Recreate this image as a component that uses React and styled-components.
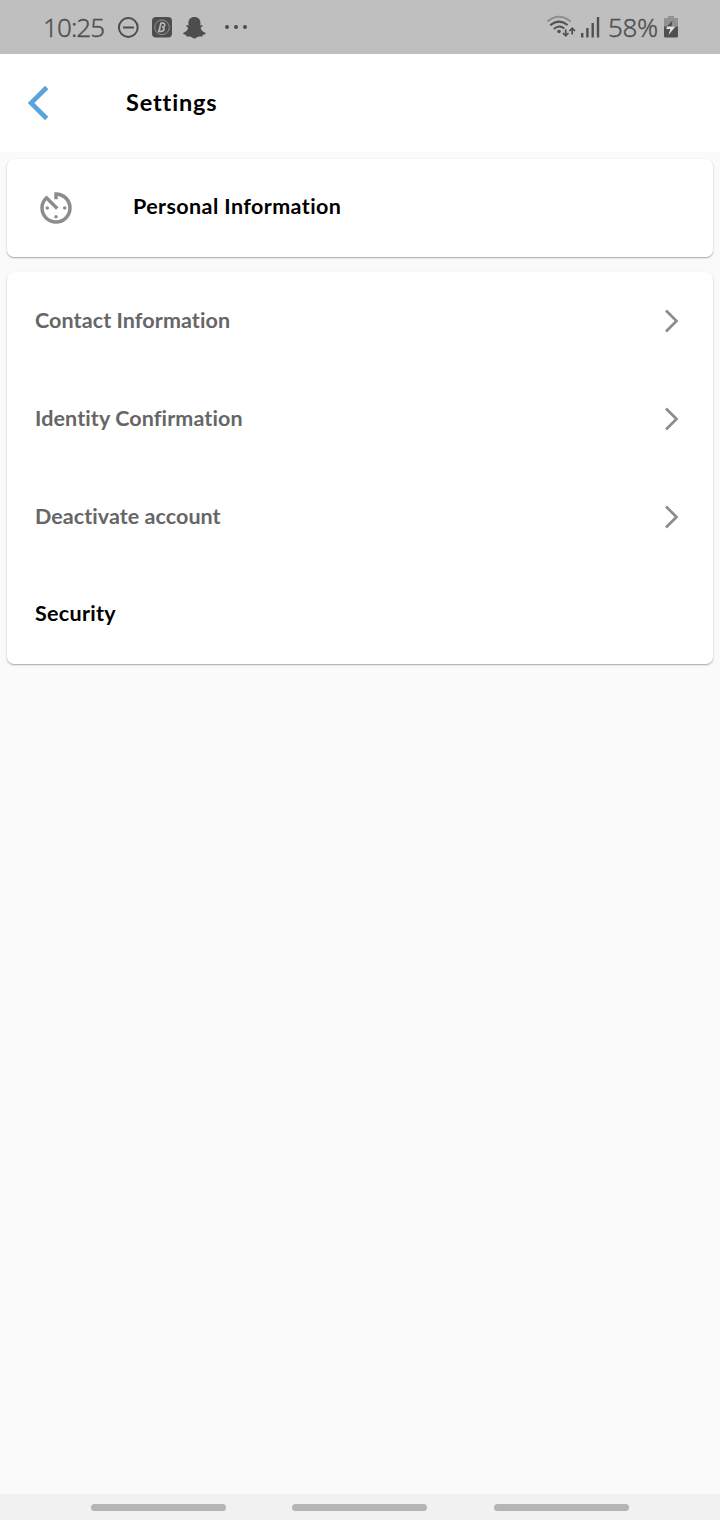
import React from "react";
import styled, { createGlobalStyle } from "styled-components";
import { MdAvTimer } from "react-icons/md";

const GlobalStyle = createGlobalStyle`
  * { box-sizing: border-box; }
  body { margin: 0; background: #fafafa; }
`;

const Screen = styled.div`
  width: 720px;
  height: 1520px;
  display: flex;
  flex-direction: column;
  background: #fafafa;
  font-family: Lato, "Noto Sans", sans-serif;
  overflow: hidden;
`;

const StatusBar = styled.header`
  height: 54px;
  flex: none;
  display: flex;
  justify-content: space-between;
  padding: 0 41px 0 43px;
  background: #bfbfbf;
  color: #505050;
`;

const StatusGroup = styled.div`
  display: flex;
  align-items: center;
  height: 54px;
  svg { display: block; flex: none; }
`;

const StatusText = styled.span`
  width: ${(p) => p.$width}px;
  padding-left: ${(p) => p.$inset || 0}px;
  font: 300 26px/36px "Noto Sans", sans-serif;
  letter-spacing: ${(p) => p.$spacing}px;
  -webkit-text-stroke: 0.35px #505050;
  white-space: nowrap;
`;

const TitleBar = styled.div`
  height: 98px;
  flex: none;
  display: flex;
  align-items: center;
  padding-left: 28px;
  background: #fff;
  svg { display: block; width: 21px; margin-right: 77px; }
`;

const Label = styled.span`
  font-size: ${(p) => p.$size || 21.5}px;
  line-height: 30px;
  font-weight: 700;
  font-variant-ligatures: none;
  letter-spacing: ${(p) => p.$spacing || 0}px;
  color: ${(p) => (p.$muted ? "#666" : "#000")};
  padding-bottom: ${(p) => p.$lift || 0}px;
  white-space: nowrap;
`;

const Content = styled.main`
  flex: 1;
  display: flex;
  flex-direction: column;
  gap: 15px;
  padding: 7px;
`;

const Card = styled.section`
  background: #fff;
  border-radius: 7px;
  box-shadow: 0 1px 2px rgba(0, 0, 0, 0.26), 0 1px 1px rgba(0, 0, 0, 0.1);
`;

const ProfileRow = styled.div`
  height: 98px;
  display: flex;
  align-items: center;
  padding: 0 28px;
  color: #8c8c8c;
  svg { margin-right: 56px; }
`;

const Row = styled.div`
  height: 98px;
  display: flex;
  align-items: center;
  justify-content: space-between;
  padding: 0 34px 0 28px;
`;

const NavBar = styled.footer`
  height: 26px;
  flex: none;
  display: flex;
  gap: 66.4px;
  align-items: center;
  padding-left: 91px;
  background: #f1f1f1;
`;

const NavHandle = styled.i`
  width: 135px;
  height: 7px;
  border-radius: 4px;
  background: #b5b5b5;
`;

const rows = [
  { text: "Contact Information", spacing: 0.09, link: true },
  { text: "Identity Confirmation", spacing: 0.11, link: true },
  { text: "Deactivate account", spacing: 0.06, link: true },
  { text: "Security", spacing: 0.3 },
];

const NotificationIcons = () => (
  <svg width="134" height="30" viewBox="116 12 134 30" fill="#4d4d4d">
    <circle cx="128.3" cy="27.5" r="9.4" fill="none" stroke="#4d4d4d" strokeWidth="2" />
    <path d="M123 26.5h11v2h-11z" />
    <rect x="152" y="17" width="20" height="20.5" rx="4" />
    <circle cx="162" cy="27.3" r="7.3" fill="none" stroke="#909090" strokeWidth="1" />
    <path
      d="M161 23.2h2c2.6 0 2.5 3.5-.9 3.9 3.2.3 2.2 4.2-1.100 4.200h-2.200zl-2 8"
      fill="none" stroke="#b5b5b5" strokeWidth="1.7"
    />
    <path d="M194.4 17c-4 0-6 2.6-6 6v2.4c-.8.3-2-.5-2.2.4-.2 1 1.4 1.3 2 2-.5 2.4-2.4 4.3-5 5.2-.6.8 1 1.6 2.8 1.9.4.6.2 1.5 1 1.6 1.1 0 2.5-.4 3.7.3 1.2.7 2.1 1.7 3.7 1.7s2.5-1 3.7-1.700c1.200-.7 2.600-.3 3.700-.3.8-.1.6-1 1-1.600 1.800-.3 3.400-1.100 2.800-1.900-2.600-.9-4.500-2.800-5-5.200.6-.7 2.200-1 2-2-.2-.9-1.400-.1-2.200-.4V23c0-3.400-2-6-6-6z" />
    <circle cx="227" cy="27" r="2" />
    <circle cx="236" cy="27" r="2" />
    <circle cx="245" cy="27" r="2" />
  </svg>
);

const SignalIcons = () => (
  <svg width="56" height="30" viewBox="546 12 56 30" fill="none" stroke="#505050">
    <path d="M547.5 21.5q11.5-9.5 23 0" stroke="#8c8c8c" strokeWidth="2" />
    <path d="M550.2 25.3q9-7.2 17.4-.3M553.8 29q5.5-4.600 10.500-.5" strokeWidth="2" />
    <circle cx="559" cy="31.5" r="1.8" fill="#505050" stroke="none" />
    <path d="M565.7 29.5v6M562.9 33l2.8 2.8 2.8-2.800M572.200 34.500v-6M569.400 31l2.800-2.800 2.800 2.800" strokeWidth="1.7" />
    <path d="M582.2 33v4.5M587.4 28v9.5M592.7 23v14.500M598 17v20.500" strokeWidth="2.4" />
  </svg>
);

const BatteryIcon = () => (
  <svg width="15" height="30" viewBox="664 12 15 30">
    <path d="M664 18h4v-2h6v2h4v9h-14z" fill="#929292" />
    <path d="M664 26.5h14v9.500q0 1.500-1.500 1.500h-11q-1.500 0-1.500-1.500z" fill="#505050" />
    <path d="M672.5 20.5l-6 6.2h5z" fill="#505050" />
    <path d="M667 26.5h8.5l-7 8.5 1.8-6h-4z" fill="#e2e2e2" />
  </svg>
);

const BackIcon = () => (
  <svg width="21" height="36" viewBox="0 0 21 36">
    <path d="M18.7 2.5L3 18l15.7 15.5" fill="none" stroke="#5ba4d9" strokeWidth="4.6" />
  </svg>
);

const ForwardIcon = () => (
  <svg width="15" height="24" viewBox="0 0 15 24">
    <path d="M2 1.5L12.5 12 2 22.5" fill="none" stroke="#8c8c8c" strokeWidth="2.7" />
  </svg>
);

export default function App() {
  return (
    <Screen>
      <GlobalStyle />
      <StatusBar>
        <StatusGroup>
          <StatusText $width={73} $spacing={-0.9}>10:25</StatusText>
          <NotificationIcons />
        </StatusGroup>
        <StatusGroup>
          <SignalIcons />
          <StatusText $width={62} $inset={6} $spacing={-0.4}>58%</StatusText>
          <BatteryIcon />
        </StatusGroup>
      </StatusBar>
      <TitleBar>
        <BackIcon />
        <Label $size={23.5} $spacing={0.85} $lift={2}>Settings</Label>
      </TitleBar>
      <Content>
        <Card>
          <ProfileRow>
            <MdAvTimer size={42} />
            <Label $spacing={0.4} $lift={4}>Personal Information</Label>
          </ProfileRow>
        </Card>
        <Card>
          {rows.map((row) => (
            <Row key={row.text}>
              <Label $muted={row.link} $spacing={row.spacing} $lift={row.link ? 2 : 4}>{row.text}</Label>
              {row.link && <ForwardIcon />}
            </Row>
          ))}
        </Card>
      </Content>
      <NavBar>
        <NavHandle />
        <NavHandle />
        <NavHandle />
      </NavBar>
    </Screen>
  );
}
